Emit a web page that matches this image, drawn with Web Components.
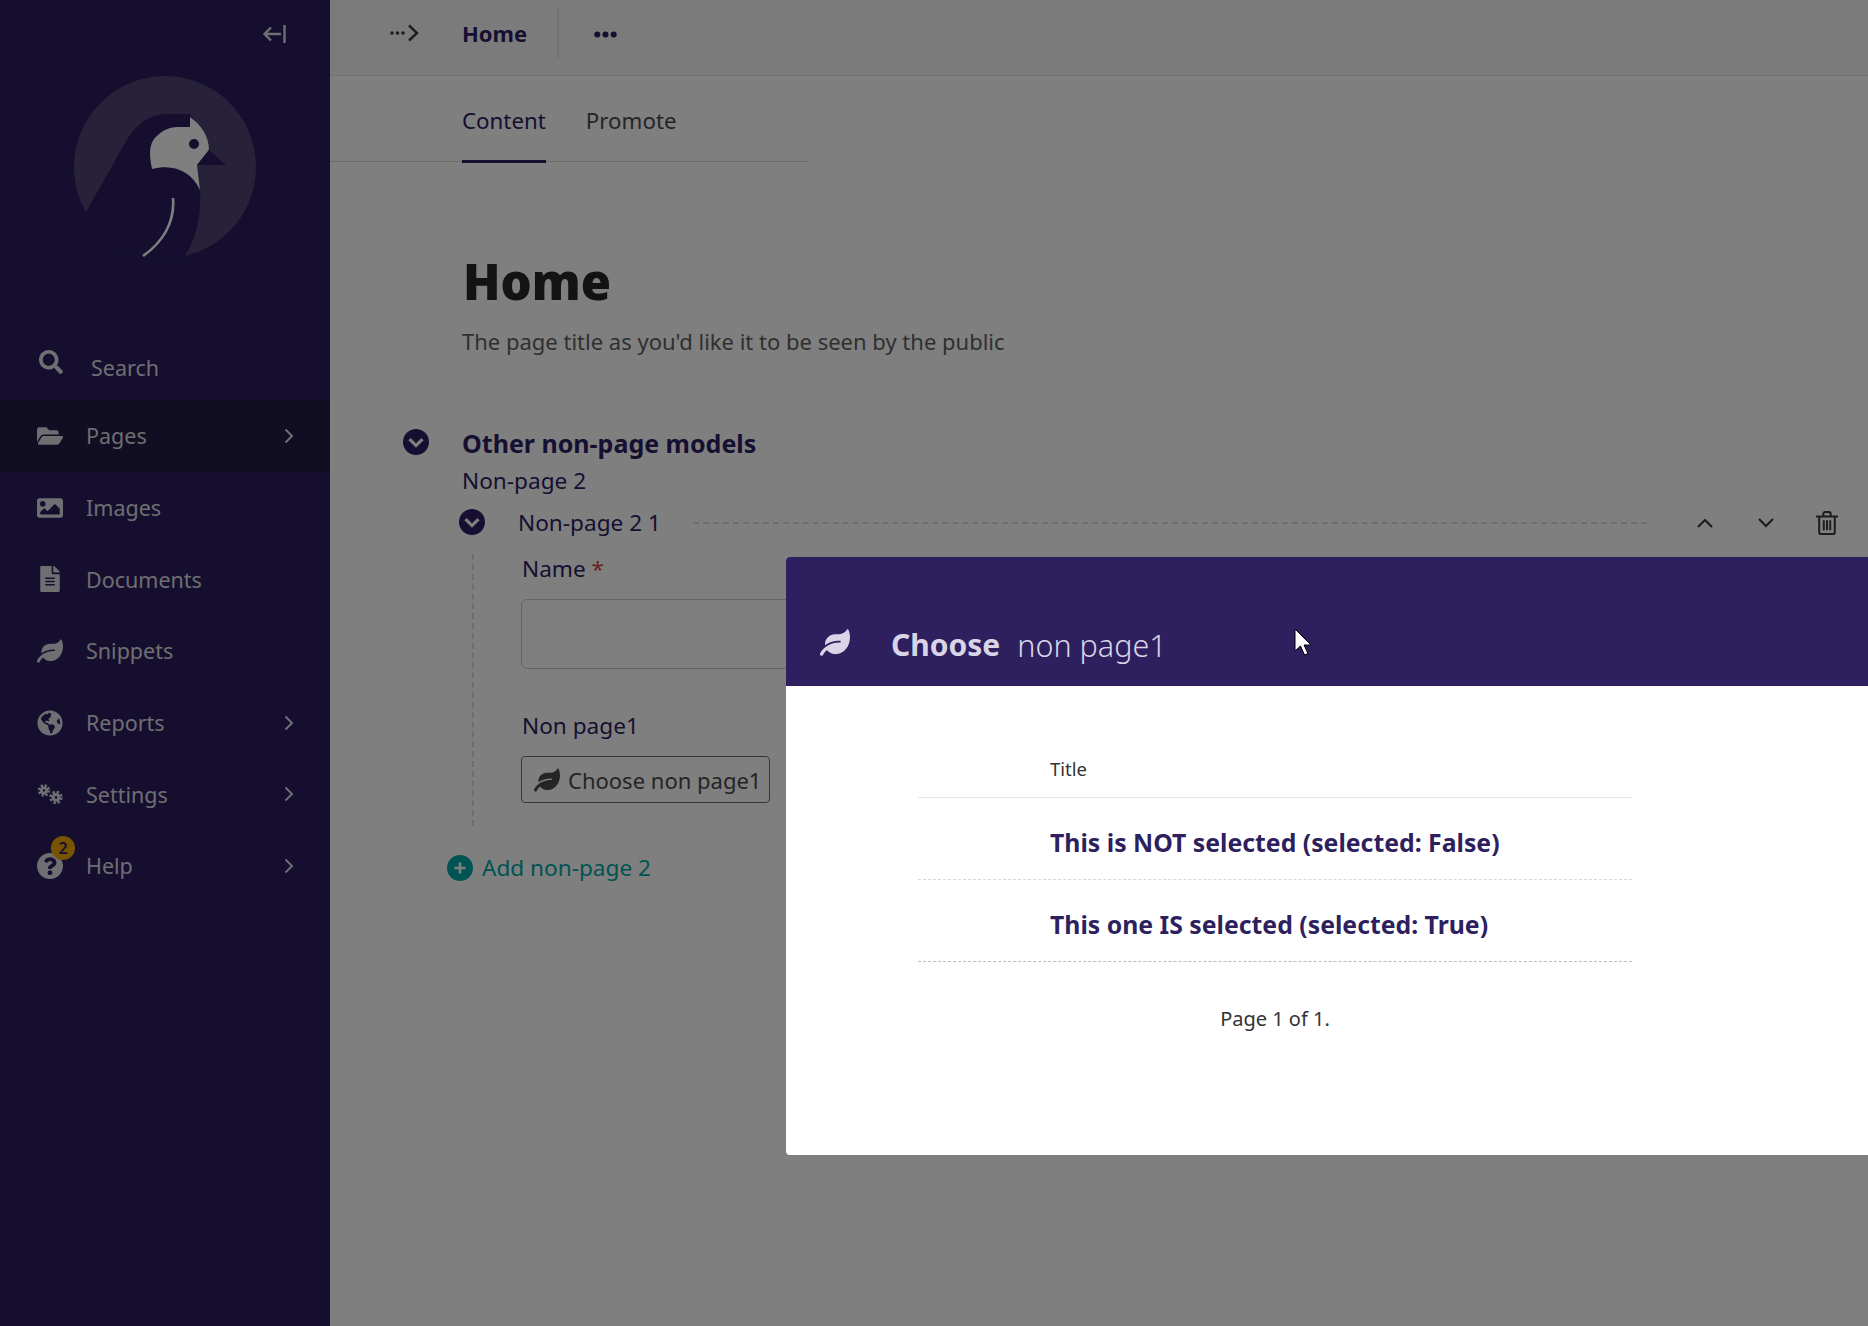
<!DOCTYPE html>
<html lang="en">
<head>
<meta charset="utf-8">
<title>Home</title>
<style>
  html, body { margin: 0; height: 100%; overflow: hidden; }
  body { font-family: "Noto Sans", "Open Sans", sans-serif; background: #fff; }
</style>
</head>
<body>
<admin-shell>
  <admin-sidebar slot="sidebar">
    <side-item icon="folder" arrow active>Pages</side-item>
    <side-item icon="image">Images</side-item>
    <side-item icon="doc">Documents</side-item>
    <side-item icon="leaf">Snippets</side-item>
    <side-item icon="globe" arrow>Reports</side-item>
    <side-item icon="cogs" arrow>Settings</side-item>
    <side-item icon="help" arrow badge="2">Help</side-item>
  </admin-sidebar>
  <page-top slot="main"></page-top>
  <page-tabs slot="main"></page-tabs>
  <page-form slot="main"></page-form>
  <chooser-modal slot="over"></chooser-modal>
</admin-shell>

<script>
const ICONS = {
  search: ["0 0 512 512", "M505 442.7L405.3 343c-4.5-4.5-10.6-7-17-7H372c27.6-35.3 44-79.7 44-128C416 93.1 322.9 0 208 0S0 93.1 0 208s93.1 208 208 208c48.3 0 92.7-16.4 128-44v16.3c0 6.4 2.5 12.5 7 17l99.7 99.7c9.4 9.4 24.6 9.4 33.9 0l28.3-28.3c9.4-9.4 9.4-24.6.1-34zM208 336c-70.7 0-128-57.2-128-128 0-70.7 57.2-128 128-128 70.7 0 128 57.2 128 128 0 70.7-57.2 128-128 128z"],
  folder: ["0 0 576 512", "M572.694 292.093L500.27 416.248A63.997 63.997 0 0 1 444.989 448H45.025c-18.523 0-30.064-20.093-20.731-36.093l72.424-124.155A64 64 0 0 1 152 256h399.964c18.523 0 30.064 20.093 20.73 36.093zM152 224h328v-48c0-26.51-21.49-48-48-48H272l-64-64H48C21.49 64 0 85.49 0 112v278.046l69.077-118.418C86.214 242.25 117.989 224 152 224z"],
  image: ["0 0 512 512", "M464 448H48c-26.51 0-48-21.49-48-48V112c0-26.51 21.49-48 48-48h416c26.51 0 48 21.49 48 48v288c0 26.51-21.49 48-48 48zM112 120c-30.928 0-56 25.072-56 56s25.072 56 56 56 56-25.072 56-56-25.072-56-56-56zM64 384h384V272l-87.515-87.515c-4.686-4.686-12.284-4.686-16.971 0L208 320l-55.515-55.515c-4.686-4.686-12.284-4.686-16.971 0L64 336v48z"],
  doc: ["0 0 384 512", "M224 136V0H24C10.7 0 0 10.7 0 24v464c0 13.3 10.7 24 24 24h336c13.3 0 24-10.7 24-24V160H248c-13.2 0-24-10.8-24-24zm64 236c0 6.6-5.4 12-12 12H108c-6.6 0-12-5.4-12-12v-8c0-6.6 5.4-12 12-12h168c6.6 0 12 5.4 12 12v8zm0-64c0 6.6-5.4 12-12 12H108c-6.6 0-12-5.4-12-12v-8c0-6.6 5.4-12 12-12h168c6.6 0 12 5.4 12 12v8zm0-72v8c0 6.6-5.4 12-12 12H108c-6.6 0-12-5.4-12-12v-8c0-6.6 5.4-12 12-12h168c6.6 0 12 5.4 12 12zm96-114.1v6.1H256V0h6.1c6.4 0 12.5 2.5 17 7l97.9 98c4.5 4.5 7 10.6 7 16.9z"],
  leaf: ["0 0 576 512", "M546.2 9.7c-5.6-12.5-21.6-13-28.3-1.2C486.9 62.4 431.4 96 368 96h-80C182 96 96 182 96 288c0 7 .8 13.7 1.5 20.5C161.3 262.8 253.4 224 384 224c8.8 0 16 7.2 16 16s-7.2 16-16 16C132.6 256 26 410.1 2.4 468c-6.6 16.3 1.2 34.9 17.5 41.6 16.4 6.8 35-1.1 41.8-17.3 1.5-3.6 20.9-47.9 71.9-90.6 32.4 43.9 94 85.8 174.9 77.2C465.5 467.5 576 326.7 576 154.3c0-50.2-10.8-102.2-29.8-144.6z"],
  globe: ["0 0 496 512", "M248 8C111.03 8 0 119.03 0 256s111.03 248 248 248 248-111.03 248-248S384.97 8 248 8zm82.29 357.6c-3.9 3.88-7.99 7.95-11.31 11.28-2.99 3-5.1 6.7-6.17 10.71-1.51 5.66-2.73 11.38-4.77 16.87l-17.39 46.85c-13.76 3-28 4.69-42.65 4.69v-27.38c1.69-12.62-7.64-36.26-22.63-51.25-6-6-9.37-14.14-9.37-22.63v-32.01c0-11.64-6.27-22.34-16.46-27.97-14.37-7.95-34.81-19.06-48.81-26.11-11.48-5.78-22.1-13.14-31.65-21.75l-.8-.72a114.792 114.792 0 0 1-18.06-20.74c-9.38-13.77-24.66-36.42-34.59-51.14 20.47-45.5 57.36-82.04 103.2-101.89l24.01 12.01C203.48 89.74 216 82.01 216 70.11v-11.3c7.99-1.29 16.12-2.11 24.39-2.42l28.3 28.3c6.25 6.25 6.25 16.38 0 22.63L264 112l-10.34 10.34c-3.12 3.12-3.12 8.19 0 11.31l4.69 4.69c3.12 3.12 3.12 8.19 0 11.31l-8 8a8.008 8.008 0 0 1-5.66 2.34h-8.99c-2.08 0-4.08.81-5.58 2.27l-9.92 9.65a8.008 8.008 0 0 0-1.58 9.31l15.59 31.19c2.66 5.32-1.21 11.58-7.15 11.58h-5.64c-1.93 0-3.79-.7-5.24-1.96l-9.28-8.06a16.017 16.017 0 0 0-15.55-3.1l-31.17 10.39a11.95 11.95 0 0 0-8.17 11.34c0 4.53 2.56 8.66 6.61 10.69l11.08 5.54c9.41 4.71 19.79 7.16 30.31 7.16s22.59 27.29 32 32h66.75c8.49 0 16.62 3.37 22.63 9.37l13.69 13.69a30.503 30.503 0 0 1 8.93 21.57 46.536 46.536 0 0 1-13.72 32.98zM417 274.25c-5.79-1.45-10.84-5-14.15-9.97l-17.98-26.97a23.97 23.97 0 0 1 0-26.62l19.59-29.38c2.32-3.47 5.5-6.29 9.24-8.15l12.98-6.49C440.2 193.59 448 223.87 448 256c0 8.67-.74 17.16-1.82 25.54L417 274.25z"],
  help: ["8 8 496 496", "M504 256c0 136.997-111.043 248-248 248S8 392.997 8 256C8 119.083 119.043 8 256 8s248 111.083 248 248zM262.655 90c-54.497 0-89.255 22.957-116.549 63.758-3.536 5.286-2.353 12.415 2.715 16.258l34.699 26.31c5.205 3.947 12.621 3.008 16.665-2.122 17.864-22.658 30.113-35.797 57.303-35.797 20.429 0 45.698 13.148 45.698 32.958 0 14.976-12.363 22.667-32.534 33.976C247.128 238.528 216 254.941 216 296v4c0 6.627 5.373 12 12 12h56c6.627 0 12-5.373 12-12v-1.333c0-28.462 83.186-29.647 83.186-106.667 0-58.002-60.165-102-116.531-102zM256 338c-25.365 0-46 20.635-46 46 0 25.364 20.635 46 46 46s46-20.636 46-46c0-25.365-20.635-46-46-46z"]
};

function icon(name, w, h, cls) {
  if (name === "cogs") {
    // two small gears, teeth are a dashed ring
    return `<svg class="${cls || ""}" width="${w}" height="${h}" viewBox="0 0 26 20" fill="none" stroke="currentColor">
      <circle cx="7" cy="6.4" r="2.6" stroke-width="2.8"/><circle cx="7" cy="6.4" r="5" stroke-width="2.4" stroke-dasharray="2.2 1.73"/>
      <circle cx="19" cy="13.4" r="2.8" stroke-width="3"/><circle cx="19" cy="13.4" r="5.4" stroke-width="2.6" stroke-dasharray="2.4 1.84"/></svg>`;
  }
  const [box, d] = ICONS[name];
  return `<svg class="${cls || ""}" width="${w}" height="${h}" viewBox="${box}" fill="currentColor"><path d="${d}"/></svg>`;
}

const chevronRight = `<svg width="10" height="16" viewBox="0 0 10 16" fill="none" stroke="currentColor" stroke-width="2"><path d="M1.5 1.5 8 8l-6.5 6.5"/></svg>`;

// round dark button with a chevron inside
function roundDown(bg, cls) {
  return `<svg class="${cls || ""}" width="26" height="26" viewBox="0 0 26 26"><circle cx="13" cy="13" r="13" fill="${bg}"/><path d="M6.5 10.2 13 16.6l6.5-6.4" fill="none" stroke="#fff" stroke-width="3.2"/></svg>`;
}

class AdminShell extends HTMLElement {
  constructor() {
    super();
    this.attachShadow({ mode: "open" });
    this.shadowRoot.innerHTML = `
      <style>
        :host { display: flex; width: 100%; height: 100vh; position: relative; overflow: hidden; }
        .main { flex: 1; min-width: 0; }
        .shade { position: absolute; inset: 0; background: rgba(0, 0, 0, .5); }
      </style>
      <slot name="sidebar"></slot>
      <div class="main"><slot name="main"></slot></div>
      <div class="shade"></div>
      <slot name="over"></slot>
    `;
  }
}

class AdminSidebar extends HTMLElement {
  constructor() {
    super();
    this.attachShadow({ mode: "open" });
    this.shadowRoot.innerHTML = `
      <style>
        :host { display: block; width: 330px; flex: none; background: #2a1d5c; color: rgba(255,255,255,.85); }
        .toggle { display: flex; justify-content: flex-end; padding: 25px 44px 0 0; height: 18px; }
        .logo { display: flex; justify-content: center; margin-top: 33px; height: 182px; }
        .search { display: flex; height: 70px; margin-top: 72px; padding-left: 39px; box-sizing: border-box; font-size: 21.5px; }
        .search svg { margin-top: 20px; }
        .search span { margin: 24px 0 0 28px; line-height: 28px; }
      </style>
      <div class="toggle">
        <svg width="24" height="18" viewBox="0 0 24 18" fill="none" stroke="currentColor" stroke-width="2.4"><path d="M22.5 0v18M19 9H2.5M9 2.5 2.5 9 9 15.5"/></svg>
      </div>
      <div class="logo">
        <svg width="182" height="184" viewBox="74 76 182 184">
          <circle cx="165" cy="167" r="91" fill="#4e4572"/>
          <path d="M86.5 211 125 143c10-18 24-29 42-29h23l20 36-13 15 3 25c2 30-6 52-16 68-20 4-42 2-60-6-16-8-28-19-38-41z" fill="#2a1d5c"/>
          <path d="M190 117c11 8 19 19 19 33l-12 15 3 25c-8-18-26-27-48-21-4-18-2-28 6-34 5-5 12-8 20-8h12z" fill="#fff"/>
          <circle cx="194" cy="144" r="5" fill="#2a1d5c"/>
          <path d="M209 150l17 15h-29z" fill="#2a1d5c"/>
          <path d="M173 198c2 24-10 44-30 58" fill="none" stroke="#fff" stroke-width="2.6"/>
        </svg>
      </div>
      <div class="search">${icon("search", 24, 24)}<span>Search</span></div>
      <slot></slot>
    `;
  }
}

class SideItem extends HTMLElement {
  constructor() {
    super();
    this.attachShadow({ mode: "open" });
  }

  connectedCallback() {
    const name = this.getAttribute("icon");
    const badge = this.getAttribute("badge");
    this.shadowRoot.innerHTML = `
      <style>
        :host { display: flex; align-items: center; height: 71.7px; padding: 0 36px 0 37px; box-sizing: border-box; font-size: 21.5px; }
        :host([active]) { background: #221a44; }
        .ic { width: 26px; margin-right: 23px; display: flex; justify-content: center; position: relative; }
        .label { flex: 1; }
        .badge { position: absolute; left: 14px; top: -17px; width: 24px; height: 24px; border-radius: 50%;
                 background: #f1a700; color: #2c1e62; font-size: 16px; font-weight: 600; line-height: 24px; text-align: center; }
        .arrow { display: flex; }
      </style>
      <span class="ic">${icon(name, name === "doc" ? 20 : 26, name === "doc" ? 26 : name === "cogs" ? 20 : 26)}${badge ? `<span class="badge">${badge}</span>` : ""}</span>
      <span class="label"><slot></slot></span>
      ${this.hasAttribute("arrow") ? `<span class="arrow">${chevronRight}</span>` : ""}
    `;
  }
}

class PageTop extends HTMLElement {
  constructor() {
    super();
    this.attachShadow({ mode: "open" });
    this.shadowRoot.innerHTML = `
      <style>
        :host { display: flex; align-items: center; height: 76px; box-sizing: border-box; border-bottom: 1px solid #e4e4e4; background: #f6f6f8; padding: 0 0 9px 60px; }
        .crumb { display: flex; color: #3b3b3b; width: 72px; flex: none; }
        b { font-size: 22px; font-weight: 700; color: #2c1e62; }
        .rule { width: 2px; height: 49px; background: #e4e4e4; margin: 0 35px 0 30px; }
        .dots { display: flex; color: #2c1e62; margin-top: 2px; }
      </style>
      <span class="crumb">
        <svg width="29" height="18" viewBox="0 0 29 18"><g fill="currentColor"><circle cx="2" cy="9" r="1.8"/><circle cx="7.5" cy="9" r="1.8"/><circle cx="13" cy="9" r="1.8"/></g><path d="M19 1.5 27 9l-8 7.5" fill="none" stroke="currentColor" stroke-width="2.4"/></svg>
      </span>
      <b>Home</b>
      <span class="rule"></span>
      <span class="dots"><svg width="23" height="7" viewBox="0 0 23 7" fill="currentColor"><circle cx="3.3" cy="3.5" r="3"/><circle cx="11.5" cy="3.5" r="3"/><circle cx="19.7" cy="3.5" r="3"/></svg></span>
    `;
  }
}

class PageTabs extends HTMLElement {
  constructor() {
    super();
    this.attachShadow({ mode: "open" });
    this.shadowRoot.innerHTML = `
      <style>
        :host { display: flex; gap: 40px; width: 478px; height: 86px; box-sizing: border-box; padding-left: 132px; border-bottom: 1px solid #d8d8d8; background: #fff; font-size: 22.3px; }
        span { height: 85px; box-sizing: border-box; padding-top: 30px; color: #4a4a4a; line-height: 30px; }
        .on { color: #2c1e62; border-bottom: 3px solid #2c1e62; height: 87px; }
      </style>
      <span class="on">Content</span><span>Promote</span>
    `;
  }
}

class PageForm extends HTMLElement {
  constructor() {
    super();
    this.attachShadow({ mode: "open" });
    this.shadowRoot.innerHTML = `
      <style>
        :host { display: block; padding-left: 132px; color: #2c1e62; font-size: 22.6px; line-height: 30px; }
        h1 { margin: 0 0 0 1px; padding-top: 87px; font-size: 49px; line-height: 64px; font-weight: 900; color: #262626; }
        .hint { color: #5f5f5f; line-height: 30px; margin-top: 13px; font-size: 22px; }
        .section { display: flex; align-items: center; position: relative; margin-top: 71px; height: 32px; }
        .section h2 { margin: 0; font-size: 25px; font-weight: 700; }
        .section svg { position: absolute; left: -59px; top: 2px; }
        .sub { margin-top: 7px; height: 30px; }
        .row { display: flex; align-items: center; margin: 12px 0 0; height: 30px; position: relative; padding-left: 56px; }
        .row > svg.tog { position: absolute; left: -3px; top: 1px; }
        .row .line { flex: 1; border-top: 2px dashed #dcdcdc; margin-left: 32px; }
        .row .tools { display: flex; align-items: center; width: 221px; color: #3b3b3b; flex: none; }
        .tools .t { width: 61px; display: flex; justify-content: center; align-items: center; }
        .tools .wrap { padding-left: 27px; display: flex; }
        .body { margin: 16px 0 0 10px; border-left: 2px dashed #dcdcdc; height: 272px; padding-left: 48px; }
        .label { height: 30px; }
        .label i { font-style: normal; color: #cd4444; }
        .input { width: 600px; height: 70px; box-sizing: border-box; border: 1px solid #c8c8c8; border-radius: 6px; margin: 15px 0 0 -1px; background: #fff; }
        .lab2 { margin: 42px 0 0; height: 30px; }
        .btn { display: inline-flex; align-items: center; gap: 8px; height: 47px; width: 249px; box-sizing: border-box; margin: 15px 0 0 -1px; padding-left: 12px;
               border: 1px solid #6f6f6f; border-radius: 4px; color: #4a4a4a; white-space: nowrap; font-size: 22px; }
        .add { display: flex; align-items: center; gap: 9px; margin: 27px 0 0 -15px; color: #00a8a6; }
        .add svg { flex: none; }
      </style>
      <h1>Home</h1>
      <div class="hint">The page title as you'd like it to be seen by the public</div>
      <div class="section">${roundDown("#2c1e62")}<h2>Other non-page models</h2></div>
      <div class="sub">Non-page 2</div>
      <div class="row">
        ${roundDown("#2c1e62", "tog")}
        <span>Non-page 2 1</span>
        <span class="line"></span>
        <span class="tools">
          <span class="wrap">
            <span class="t"><svg width="16" height="10" viewBox="0 0 16 10" fill="none" stroke="currentColor" stroke-width="2.2"><path d="M1 9 8 2l7 7"/></svg></span>
            <span class="t"><svg width="16" height="10" viewBox="0 0 16 10" fill="none" stroke="currentColor" stroke-width="2.2"><path d="M1 1l7 7 7-7"/></svg></span>
            <span class="t"><svg width="22" height="26" viewBox="0 0 24 26" fill="none" stroke="currentColor" stroke-width="2.2"><path d="M0 6h24M3.5 6v17a2 2 0 0 0 2 2h13a2 2 0 0 0 2-2V6M8 6V3a2 2 0 0 1 2-2h4a2 2 0 0 1 2 2v3M8.5 10v11M12 10v11M15.5 10v11"/></svg></span>
          </span>
        </span>
      </div>
      <div class="body">
        <div class="label">Name <i>*</i></div>
        <div class="input"></div>
        <div class="lab2">Non page1</div>
        <div class="btn">${icon("leaf", 26, 24)}<span>Choose non page1</span></div>
      </div>
      <div class="add">
        <svg width="26" height="26" viewBox="0 0 26 26"><circle cx="13" cy="13" r="13" fill="#00a8a6"/><path d="M13 7.5v11M7.5 13h11" stroke="#fff" stroke-width="2.6"/></svg>
        <span>Add non-page 2</span>
      </div>
    `;
  }
}

class ChooserModal extends HTMLElement {
  constructor() {
    super();
    this.attachShadow({ mode: "open" });
    this.shadowRoot.innerHTML = `
      <style>
        :host { position: absolute; left: 786px; top: 557px; width: 1200px; height: 598px; background: #fff; border-radius: 4px 0 0 4px; overflow: hidden; }
        header { position: relative; height: 129px; box-sizing: border-box; background: #2e1f5e; color: #d9d5e6; display: flex; align-items: flex-end; padding: 0 0 20px 34px; }
        header svg.leaf { margin-bottom: 10px; margin-right: 41px; }
        header b { font-size: 30px; font-weight: 700; line-height: 42px; }
        header span { font-size: 30.5px; font-weight: 300; margin-left: 17px; line-height: 42px; }
        .cursor { position: absolute; left: 508px; top: 71px; }
        .list { width: 714px; margin-left: 132px; color: #333; }
        .head { height: 112px; box-sizing: border-box; padding: 70px 0 0 132px; font-size: 18.5px; line-height: 26px; border-bottom: 1px solid #e6e6e6; }
        .item { height: 82px; box-sizing: border-box; border-bottom: 1px dashed #d8d8d8; padding-left: 132px; font-size: 24.8px; font-weight: 700; color: #2e1f5e; line-height: 32px; padding-top: 28px; }
        .item.last { border-bottom-color: #bdbdbd; }
        .pages { text-align: center; font-size: 20px; margin-top: 43px; line-height: 28px; }
      </style>
      <header>
        ${icon("leaf", 30, 27, "leaf")}
        <b>Choose</b><span>non page1</span>
        <svg class="cursor" width="18" height="28" viewBox="0 0 18 28"><path d="M1 1v22l5.5-5 4 9 3.5-1.5-4-8.5H17z" fill="#fff" stroke="#000" stroke-width="1"/></svg>
      </header>
      <div class="list">
        <div class="head">Title</div>
        <div class="item">This is NOT selected (selected: False)</div>
        <div class="item last">This one IS selected (selected: True)</div>
        <div class="pages">Page 1 of 1.</div>
      </div>
    `;
  }
}

customElements.define("admin-shell", AdminShell);
customElements.define("admin-sidebar", AdminSidebar);
customElements.define("side-item", SideItem);
customElements.define("page-top", PageTop);
customElements.define("page-tabs", PageTabs);
customElements.define("page-form", PageForm);
customElements.define("chooser-modal", ChooserModal);
</script>
</body>
</html>
